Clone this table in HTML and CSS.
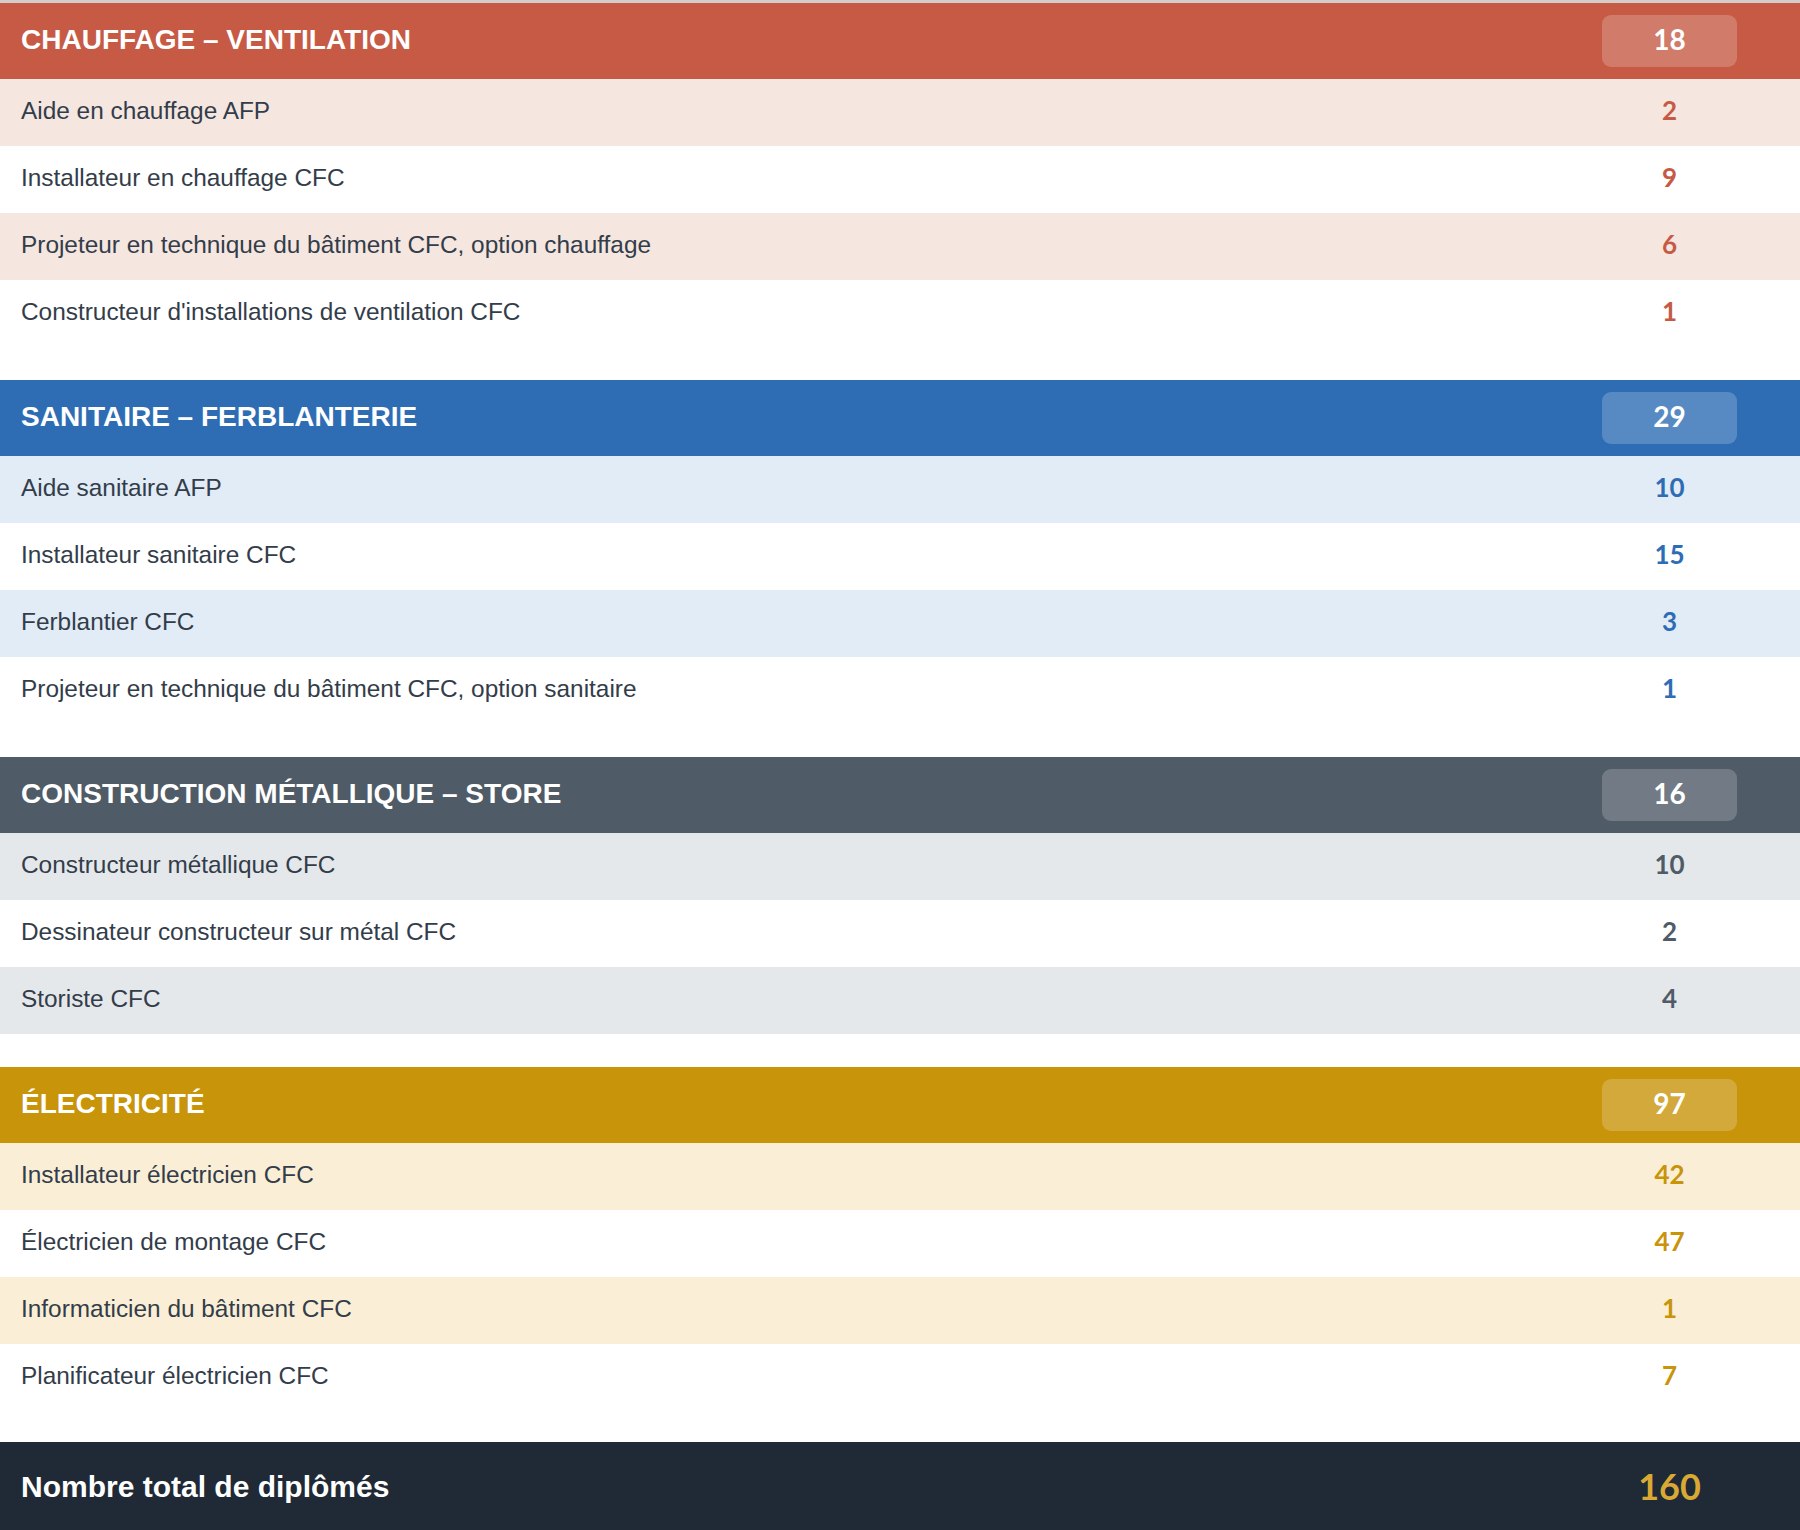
FILE: index.html
```html
<!DOCTYPE html>
<html lang="fr">
<head>
<meta charset="utf-8">
<title>Diplômés</title>
<link rel="stylesheet" href="styles.css">
</head>
<body>
<main class="page">
  <section class="group group--red">
    <header class="group-head">
      <h2 class="group-title">CHAUFFAGE – VENTILATION</h2>
      <span class="badge">18</span>
    </header>
    <div class="row"><span class="label">Aide en chauffage AFP</span><span class="num">2</span></div>
    <div class="row"><span class="label">Installateur en chauffage CFC</span><span class="num">9</span></div>
    <div class="row"><span class="label">Projeteur en technique du bâtiment CFC, option chauffage</span><span class="num">6</span></div>
    <div class="row"><span class="label">Constructeur d'installations de ventilation CFC</span><span class="num">1</span></div>
  </section>

  <section class="group group--blue">
    <header class="group-head">
      <h2 class="group-title">SANITAIRE – FERBLANTERIE</h2>
      <span class="badge">29</span>
    </header>
    <div class="row"><span class="label">Aide sanitaire AFP</span><span class="num">10</span></div>
    <div class="row"><span class="label">Installateur sanitaire CFC</span><span class="num">15</span></div>
    <div class="row"><span class="label">Ferblantier CFC</span><span class="num">3</span></div>
    <div class="row"><span class="label">Projeteur en technique du bâtiment CFC, option sanitaire</span><span class="num">1</span></div>
  </section>

  <section class="group group--slate">
    <header class="group-head">
      <h2 class="group-title">CONSTRUCTION MÉTALLIQUE – STORE</h2>
      <span class="badge">16</span>
    </header>
    <div class="row"><span class="label">Constructeur métallique CFC</span><span class="num">10</span></div>
    <div class="row"><span class="label">Dessinateur constructeur sur métal CFC</span><span class="num">2</span></div>
    <div class="row"><span class="label">Storiste CFC</span><span class="num">4</span></div>
  </section>

  <section class="group group--gold">
    <header class="group-head">
      <h2 class="group-title">ÉLECTRICITÉ</h2>
      <span class="badge">97</span>
    </header>
    <div class="row"><span class="label">Installateur électricien CFC</span><span class="num">42</span></div>
    <div class="row"><span class="label">Électricien de montage CFC</span><span class="num">47</span></div>
    <div class="row"><span class="label">Informaticien du bâtiment CFC</span><span class="num">1</span></div>
    <div class="row"><span class="label">Planificateur électricien CFC</span><span class="num">7</span></div>
  </section>

  <footer class="total">
    <span class="total-label">Nombre total de diplômés</span>
    <span class="total-num">160</span>
  </footer>
</main>
</body>
</html>
```

FILE: styles.css
```css
html, body {
  margin: 0;
  padding: 0;
  background: #ffffff;
}

body {
  font-family: "Liberation Sans", Arial, sans-serif;
  color: #333d4a;
}

.page {
  border-top: 3px solid #d3cecc;
  display: flex;
  flex-direction: column;
}

.group {
  display: flex;
  flex-direction: column;
  margin-bottom: 33px;
}

.group:last-of-type {
  margin-bottom: 31px;
}

.group-head {
  height: 76px;
  box-sizing: border-box;
  display: flex;
  align-items: center;
  padding: 0 63px 0 21px;
  background: var(--main);
  color: #ffffff;
}

.group-title {
  flex: 1;
  margin: 0 0 3px 0;
  font-size: 28px;
  font-weight: 700;
  line-height: 32px;
}

.badge {
  width: 135px;
  height: 52px;
  box-sizing: border-box;
  padding-bottom: 4px;
  border-radius: 9px;
  background: rgba(255, 255, 255, 0.2);
  display: flex;
  align-items: center;
  justify-content: center;
  font-family: Lato, "Liberation Sans", sans-serif;
  font-weight: 700;
  font-size: 28px;
  line-height: 1;
  color: #ffffff;
}

.row {
  height: 67px;
  box-sizing: border-box;
  display: flex;
  align-items: center;
  padding: 0 63px 3px 21px;
  background: #ffffff;
}

.row:nth-of-type(odd) {
  background: var(--tint);
}

.label {
  flex: 1;
  font-size: 24.4px;
  line-height: 28px;
}

.num {
  width: 135px;
  box-sizing: border-box;
  padding-bottom: 2px;
  text-align: center;
  font-family: Lato, "Liberation Sans", sans-serif;
  font-weight: 700;
  font-size: 26px;
  line-height: 28px;
  color: var(--main);
}

.group--red {
  --main: #c65a45;
  --tint: #f5e6e0;
}

.group--blue {
  --main: #2e6db4;
  --tint: #e1ecf6;
}

.group--slate {
  --main: #4f5b67;
  --tint: #e5e8eb;
}

.group--gold {
  --main: #c8940a;
  --tint: #faefd6;
}

.total {
  height: 90px;
  box-sizing: border-box;
  display: flex;
  align-items: center;
  padding: 0 63px 0 21px;
  background: #1f2a36;
  color: #ffffff;
}

.total-label {
  flex: 1;
  font-size: 30px;
  font-weight: 700;
  line-height: 34px;
}

.total-num {
  width: 135px;
  box-sizing: border-box;
  padding-bottom: 2px;
  text-align: center;
  font-family: Lato, "Liberation Sans", sans-serif;
  font-weight: 700;
  font-size: 36px;
  line-height: 40px;
  color: #d9a934;
}
```
